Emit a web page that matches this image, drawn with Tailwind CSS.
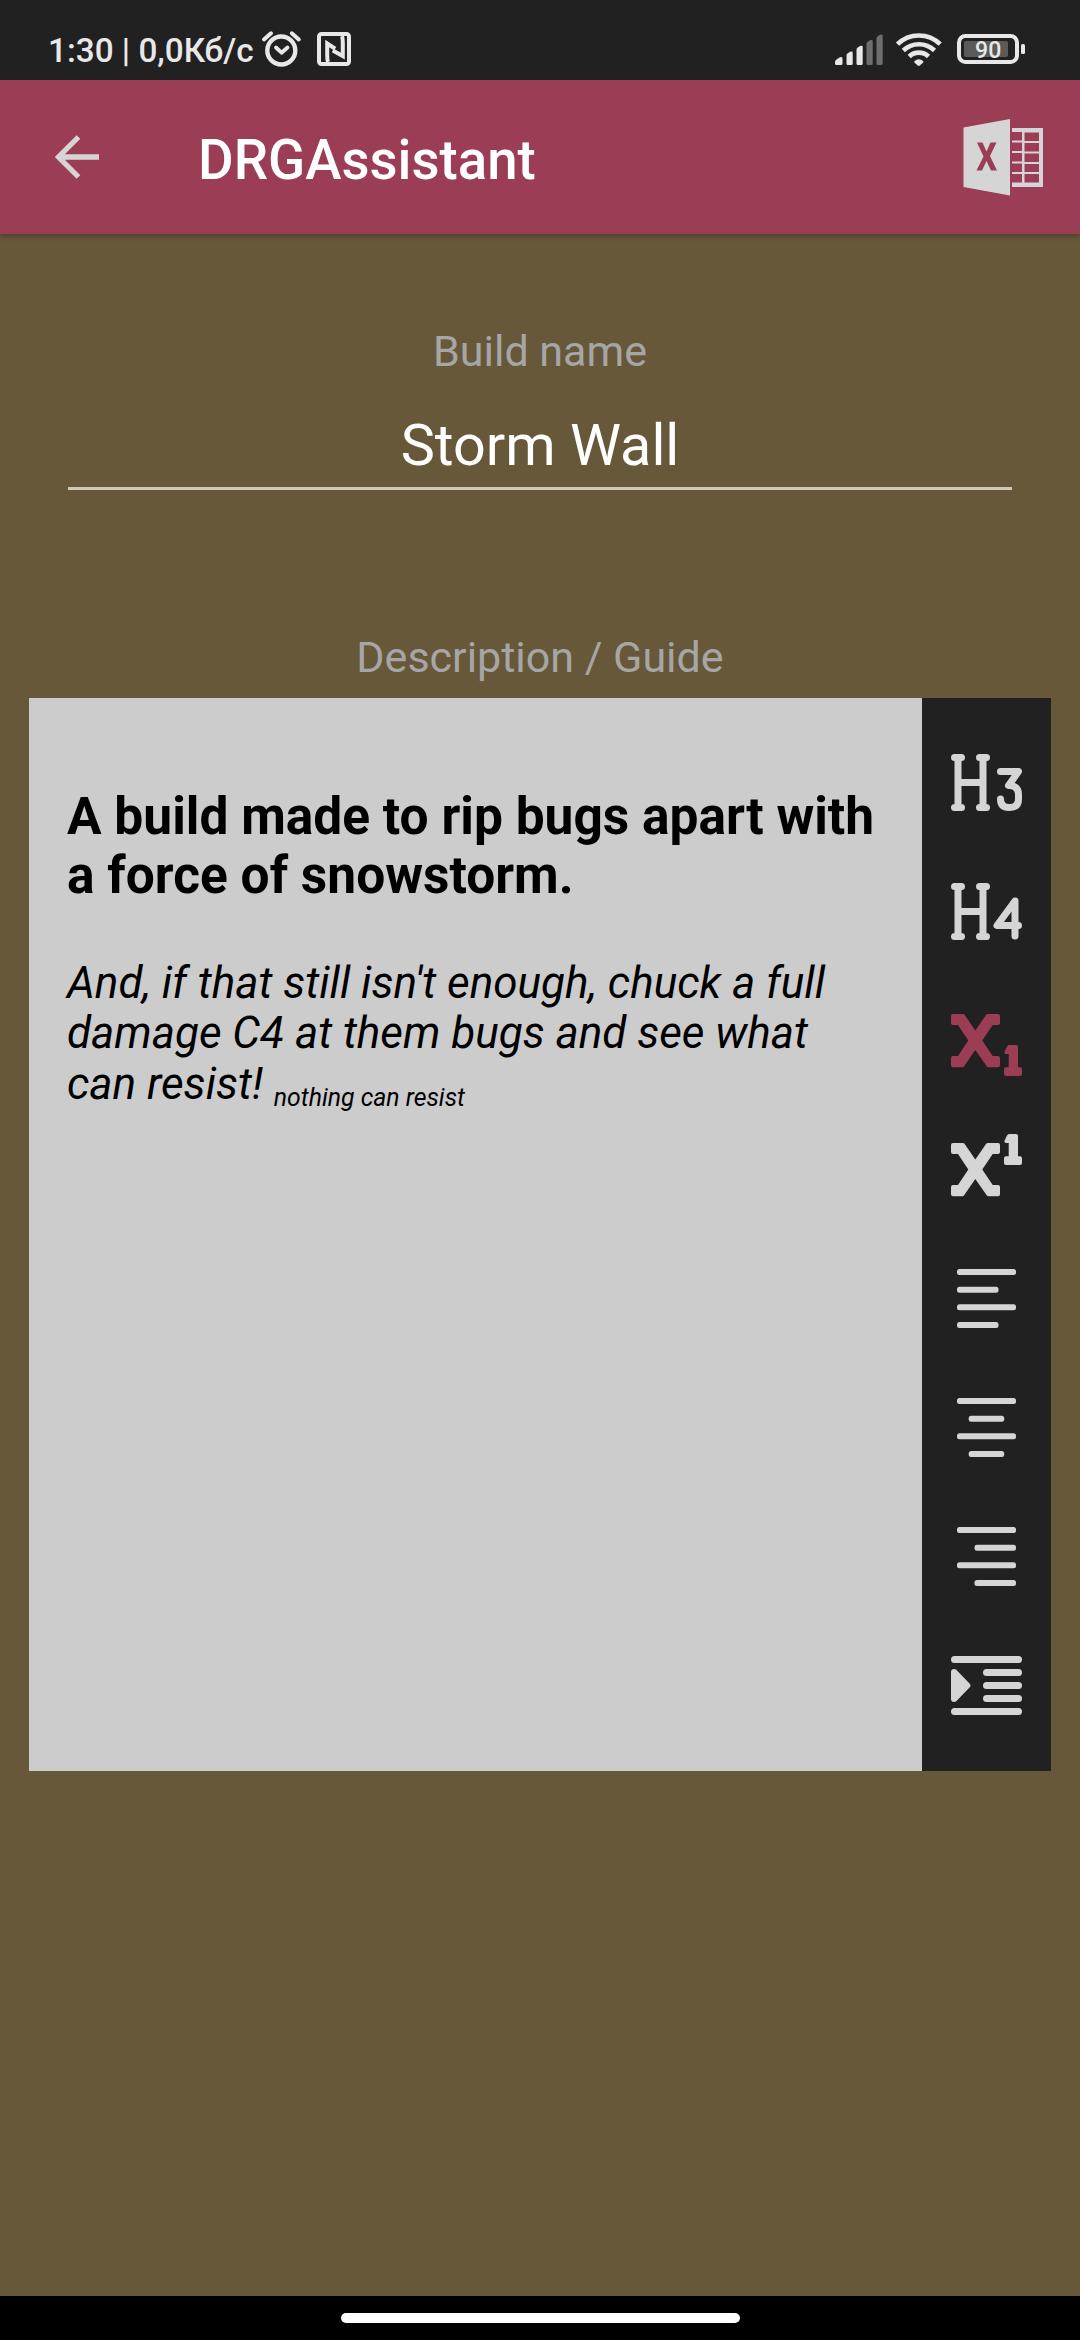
<!DOCTYPE html>
<html lang="en">
<head>
<meta charset="utf-8">
<title>DRGAssistant</title>
<script src="https://cdn.jsdelivr.net/npm/@tailwindcss/browser@4"></script>
</head>
<body class="w-[1080px] h-[2340px] overflow-hidden bg-[#67583a] font-['Roboto',sans-serif] flex flex-col">
  <!-- status bar -->
  <div class="relative z-20 h-20 shrink-0 bg-[#212121] flex items-start justify-between text-[#e8e8e8]">
    <div class="flex items-start pl-12">
      <span class="w-[206px] h-20 leading-[101px] text-[33.300px] font-medium whitespace-nowrap">1:30 | 0,0Кб/с</span>
      <svg class="w-[110px] h-20" viewBox="254 0 110 80" fill="none" stroke="currentColor">
        <circle cx="281.3" cy="50.5" r="14" stroke-width="4.4"/>
        <path d="M264 39.5l7-6.2M298.800 39.500l-7-6.200" stroke-width="4" stroke-linecap="round"/>
        <path d="M276 47.500l5.500 5.200 6-5.200" stroke-width="3.800" stroke-linecap="round" stroke-linejoin="round"/>
        <rect x="319" y="34" width="30" height="30" rx="2.500" stroke-width="4"/>
        <path d="M328 62c-.8-2-.8-4-.8-6.500V43.500l8 5.200M342 36c.8 2 .8 4 .8 6.500V56l-10-5.500" stroke-width="4"/>
      </svg>
    </div>
    <svg class="w-[200px] h-20 mr-[50px]" viewBox="830 0 200 80" fill="currentColor">
      <path d="M835 65v-3q0-1.500 1.500-2.500l3-2q3-1.200 3 1v5q0 1.500-1.500 1.500h-4.500q-1.500 0-1.500-1zM846.500 63.500v-8q0-1.500 1-2l2.500-1.700q2.700-1 2.700 1v10.700q0 1.500-1.500 1.500h-3.200q-1.500 0-1.500-1.500zM856.500 63.500V49.700q0-1.500 1-2l2.500-1.700q2.700-1 2.700 1v16.500q0 1.500-1.500 1.500h-3.200q-1.500 0-1.500-1.500z"/>
      <path fill="#6e6e6e" d="M866.500 63.500V44q0-1.500 1-2l2.500-1.700q2.700-1 2.700 1v22.200q0 1.500-1.500 1.500h-3.200q-1.500 0-1.500-1.500zM876.500 63.500V38.500q0-1.500 1-2l2.500-1.700q2.700-1 2.700 1v27.700q0 1.500-1.500 1.500h-3.200q-1.500 0-1.500-1.500z"/>
      <g fill="none" stroke="currentColor" stroke-width="4.600">
        <path d="M897.500 44.200a30.500 30.500 0 0 1 42.700 0M903.300 50.500a22.500 22.500 0 0 1 31.200 0M909.200 56.500a14 14 0 0 1 19.300 0"/>
      </g>
      <path d="M914.300 61.300q4.500-4 9 0v1.200l-3.500 3q-1 .8-2 0l-3.500-3z"/>
      <rect x="959" y="36" width="58" height="26" rx="6.500" fill="none" stroke="currentColor" stroke-width="4"/>
      <rect x="964" y="41" width="44" height="16" rx="2" fill="#5a5a5a"/>
      <rect x="1021" y="44" width="4" height="10" rx="1.500"/>
      <text x="988.2" y="57.800" font-size="23" font-weight="500" text-anchor="middle">90</text>
    </svg>
  </div>

  <!-- app bar -->
  <header class="relative z-10 h-[154px] shrink-0 bg-[#9b3d54] flex shadow-[0_2px_5px_rgba(0,0,0,0.3)]">
    <svg class="w-[198px] h-full" viewBox="0 80 198 154" fill="none" stroke="#d5d5d5" stroke-width="5.300">
      <path d="M99 157H59M78.500 137L58.500 157l20 20"/>
    </svg>
    <h1 class="leading-[160px] text-[54.600px] font-medium text-white">DRGAssistant</h1>
    <svg class="w-[120px] h-full ml-auto" viewBox="960 80 120 154" fill="#d5d5d5">
      <path fill-rule="evenodd" d="M963.500 127.500l46.500-8.500v76.500l-46.500-8.500zM977 142.500l6.500 14-7 14h5.500l4.500-9.500 4.500 9.500h6l-7-14.500 6.500-13.500h-6l-4 9-4-9z"/>
      <path fill-rule="evenodd" d="M1012 128h31v59h-31v-4.500h10v-8.500h-10v-2h10v-8.500h-10v-2h10v-8.500h-10v-2h10v-8.500h-10v-2h10v-8.500h-10zM1024.500 132.500v8.500h14.500v-8.500zM1024.500 143v8.500h14.500v-8.500zM1024.500 153.500v8.500h14.500v-8.500zM1024.500 164v8h14.500v-8zM1024.500 174v8.500h14.500v-8.500z"/>
    </svg>
  </header>

  <main class="flex-1 flex flex-col items-center">
    <label class="mt-[91px] h-[52px] leading-[52px] text-[43px] text-[#a6a6a6]">Build name</label>
    <div class="mt-[34px] w-[944px] h-[79px] border-b-[3px] border-[#cfc8bb] text-center text-white text-[57.500px] leading-[70px]">Storm Wall</div>
    <label class="mt-[141px] h-[52px] leading-[52px] text-[43px] text-[#a6a6a6]">Description / Guide</label>

    <!-- editor and its format toolbar -->
    <section class="mt-[15px] w-[1022px] h-[1073px] flex">
      <article class="w-[893px] bg-[#ccc] pl-[38px] pt-[90px] text-black">
        <h2 class="text-[51.480px] leading-[58.500px] font-bold whitespace-nowrap">A build made to rip bugs apart with<br>a force of snowstorm.</h2>
        <p class="mt-[53px] italic text-[44px] leading-[50.300px] whitespace-nowrap">And, if that still isn't enough, chuck a full<br>damage C4 at them bugs and see what<br>can resist! <span class="relative top-[7px] text-[24.800px] leading-none">nothing can resist</span></p>
      </article>
      <nav class="w-[129px] bg-[#212121] pt-5 flex flex-col text-[#d5d5d5]">
        <svg class="size-[129px]" viewBox="0 0 129 129" fill="none" stroke="currentColor" stroke-width="7" stroke-linecap="round" stroke-linejoin="round">
          <path d="M32.500 39.500h7M57.500 39.500h7M32.500 89.500h7M57.500 89.500h7M36 40v49M61 40v49M36 64.500h25"/>
          <path d="M78.500 53.500h18L86.500 67.500h2q8 1 8 9V81q0 8.500-8.500 8.500h-1q-8.500 0-8.500-8.500"/>
        </svg>
        <svg class="size-[129px]" viewBox="0 0 129 129" fill="none" stroke="currentColor" stroke-width="7" stroke-linecap="round" stroke-linejoin="round">
          <path d="M32.500 39.500h7M57.500 39.500h7M32.500 89.500h7M57.500 89.500h7M36 40v49M61 40v49M36 64.500h25"/>
          <path d="M93 89V54L75 78.500h21.500"/>
        </svg>
        <svg class="size-[129px] text-[#9b3d54]" viewBox="0 0 129 129" fill="currentColor">
          <path d="M31 38H41q1 0 1.700 1L53.300 54.500 64 39q.7-1 1.700-1H76q2 0 2 2v7q0 2-2 2h-5.300L60.300 64.600 70.700 80H76q2 0 2 2v7.300q0 2-2 2h-9.500q-1.200 0-2-1.200L53.300 74 42.300 90.100q-.8 1.200-2 1.200H31q-2 0-2-2V82q0-2 2-2h5L46.300 64.600 36 49h-5q-2 0-2-2v-7q0-2 2-2z"/>
          <path d="M87 69h7q2 0 2 2v20.300h2q2 0 2 2V98q0 2-2 2H84q-2 0-2-2v-4.700q0-2 2-2h2.700V78H84q-2 0-1.500-2.200l2.500-5.300q.8-1.500 2-1.500z"/>
        </svg>
        <svg class="size-[129px]" viewBox="0 0 129 129" fill="currentColor">
          <path d="M31 38H41q1 0 1.700 1L53.300 54.500 64 39q.7-1 1.700-1H76q2 0 2 2v7q0 2-2 2h-5.300L60.300 64.600 70.700 80H76q2 0 2 2v7.300q0 2-2 2h-9.500q-1.200 0-2-1.200L53.300 74 42.300 90.100q-.8 1.200-2 1.200H31q-2 0-2-2V82q0-2 2-2h5L46.300 64.600 36 49h-5q-2 0-2-2v-7q0-2 2-2z"/>
          <path d="M87 29h7q2 0 2 2v20.300h2q2 0 2 2V58q0 2-2 2H84q-2 0-2-2v-4.700q0-2 2-2h2.700V38H84q-2 0-1.500-2.200l2.500-5.300q.8-1.500 2-1.500z"/>
        </svg>
        <svg class="size-[129px]" viewBox="0 0 129 129" fill="currentColor">
          <rect x="35" y="35" width="59" height="6" rx="2.500"/><rect x="35" y="52.700" width="41.500" height="6" rx="2.500"/><rect x="35" y="70.300" width="59" height="6" rx="2.500"/><rect x="35" y="88" width="41.500" height="6" rx="2.500"/>
        </svg>
        <svg class="size-[129px]" viewBox="0 0 129 129" fill="currentColor">
          <rect x="35" y="35" width="59" height="6" rx="2.500"/><rect x="46.700" y="52.700" width="35.500" height="6" rx="2.500"/><rect x="35" y="70.300" width="59" height="6" rx="2.500"/><rect x="46.700" y="88" width="35.500" height="6" rx="2.500"/>
        </svg>
        <svg class="size-[129px]" viewBox="0 0 129 129" fill="currentColor">
          <rect x="35" y="35" width="59" height="6" rx="2.500"/><rect x="52.500" y="52.700" width="41.500" height="6" rx="2.500"/><rect x="35" y="70.300" width="59" height="6" rx="2.500"/><rect x="52.500" y="88" width="41.500" height="6" rx="2.500"/>
        </svg>
        <svg class="size-[129px]" viewBox="0 0 129 129" fill="currentColor">
          <rect x="29" y="35" width="71" height="7" rx="3.500"/><rect x="61" y="48" width="39" height="7" rx="3.500"/><rect x="61" y="61" width="39" height="7" rx="3.500"/><rect x="61" y="74" width="39" height="7" rx="3.500"/><rect x="29" y="87" width="71" height="7" rx="3.500"/>
          <path d="M29 51q0-3 3-3 1.500 0 2.500 1L47.500 62.500q2 2 0 4L34.500 80q-1 1-2.500 1-3 0-3-3z"/>
        </svg>
      </nav>
    </section>
  </main>

  <!-- gesture bar -->
  <footer class="h-11 shrink-0 bg-black flex justify-center pt-[17px]">
    <div class="w-[399px] h-[10px] rounded-full bg-white"></div>
  </footer>
</body>
</html>
